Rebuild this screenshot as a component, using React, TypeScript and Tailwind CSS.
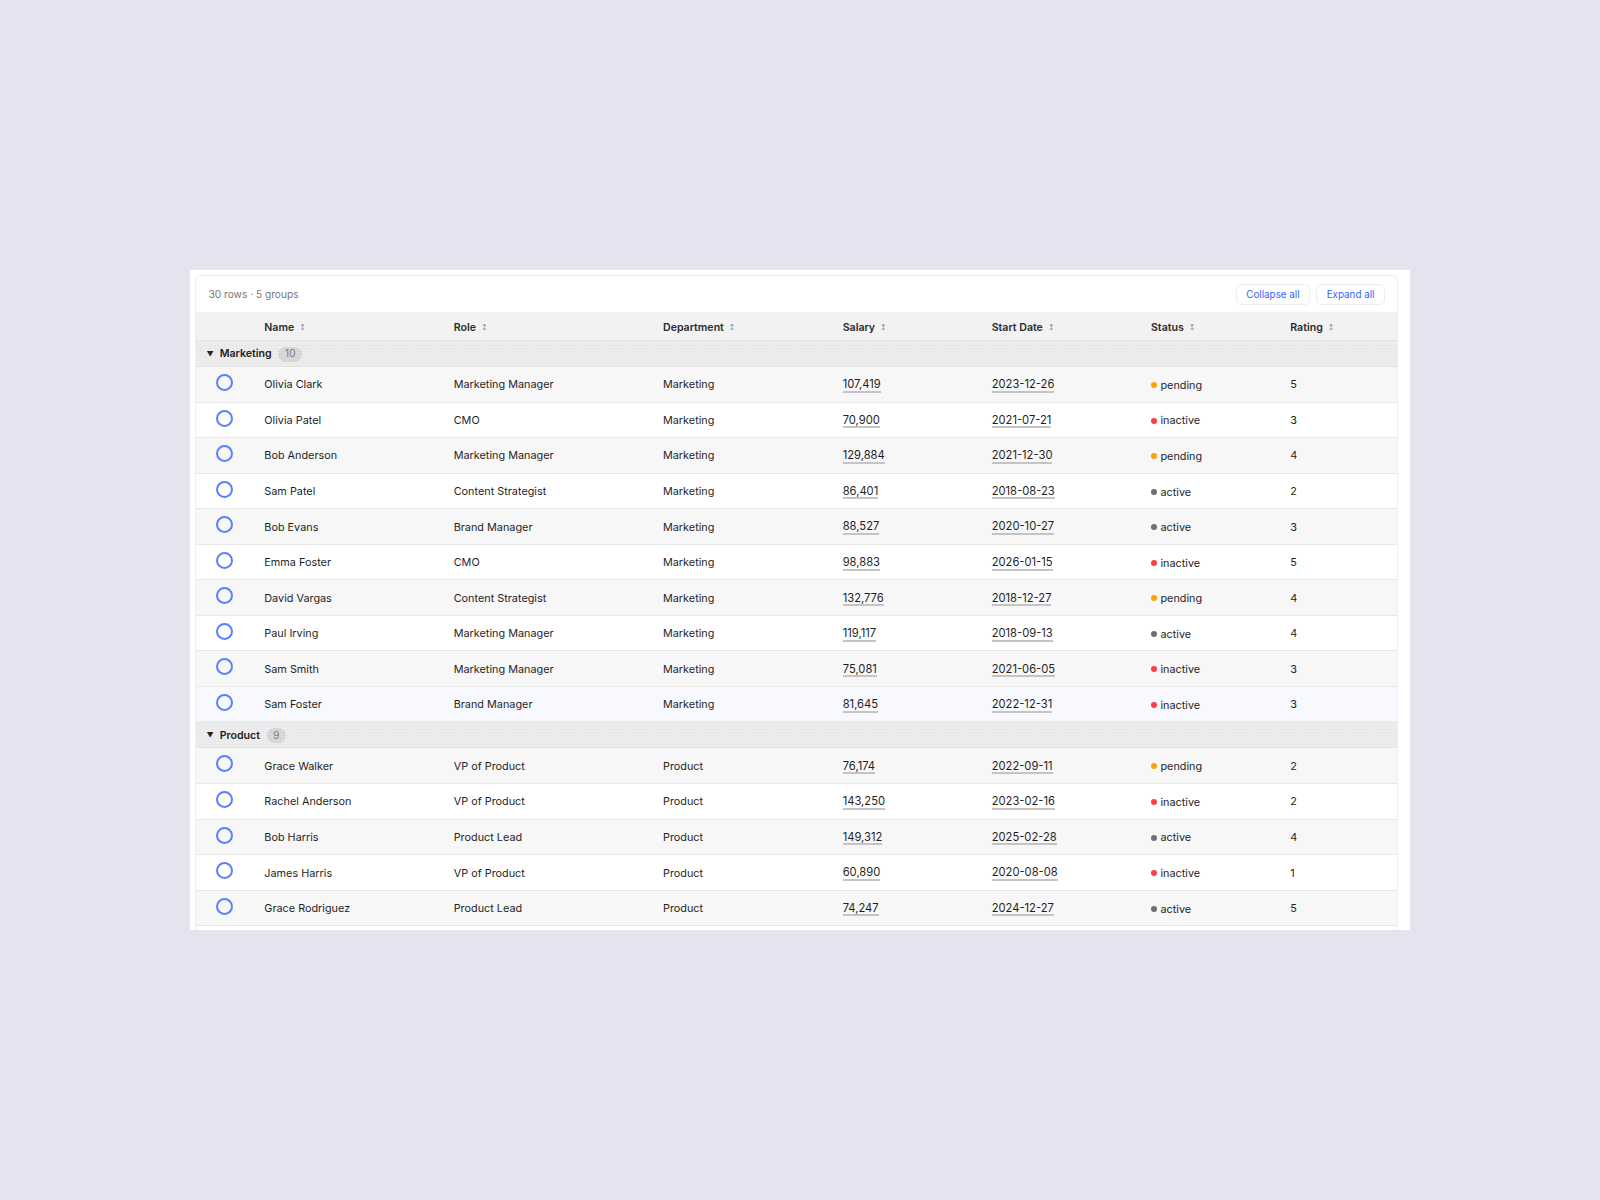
const FONT = "font-['Inter',sans-serif]";

type Row = { name: string; role: string; dept: string; salary: string; start: string; status: "pending" | "inactive" | "active"; rating: number };

const marketing: Row[] = [
  { name: "Olivia Clark", role: "Marketing Manager", dept: "Marketing", salary: "107,419", start: "2023-12-26", status: "pending", rating: 5 },
  { name: "Olivia Patel", role: "CMO", dept: "Marketing", salary: "70,900", start: "2021-07-21", status: "inactive", rating: 3 },
  { name: "Bob Anderson", role: "Marketing Manager", dept: "Marketing", salary: "129,884", start: "2021-12-30", status: "pending", rating: 4 },
  { name: "Sam Patel", role: "Content Strategist", dept: "Marketing", salary: "86,401", start: "2018-08-23", status: "active", rating: 2 },
  { name: "Bob Evans", role: "Brand Manager", dept: "Marketing", salary: "88,527", start: "2020-10-27", status: "active", rating: 3 },
  { name: "Emma Foster", role: "CMO", dept: "Marketing", salary: "98,883", start: "2026-01-15", status: "inactive", rating: 5 },
  { name: "David Vargas", role: "Content Strategist", dept: "Marketing", salary: "132,776", start: "2018-12-27", status: "pending", rating: 4 },
  { name: "Paul Irving", role: "Marketing Manager", dept: "Marketing", salary: "119,117", start: "2018-09-13", status: "active", rating: 4 },
  { name: "Sam Smith", role: "Marketing Manager", dept: "Marketing", salary: "75,081", start: "2021-06-05", status: "inactive", rating: 3 },
  { name: "Sam Foster", role: "Brand Manager", dept: "Marketing", salary: "81,645", start: "2022-12-31", status: "inactive", rating: 3 },
];

const product: Row[] = [
  { name: "Grace Walker", role: "VP of Product", dept: "Product", salary: "76,174", start: "2022-09-11", status: "pending", rating: 2 },
  { name: "Rachel Anderson", role: "VP of Product", dept: "Product", salary: "143,250", start: "2023-02-16", status: "inactive", rating: 2 },
  { name: "Bob Harris", role: "Product Lead", dept: "Product", salary: "149,312", start: "2025-02-28", status: "active", rating: 4 },
  { name: "James Harris", role: "VP of Product", dept: "Product", salary: "60,890", start: "2020-08-08", status: "inactive", rating: 1 },
  { name: "Grace Rodriguez", role: "Product Lead", dept: "Product", salary: "74,247", start: "2024-12-27", status: "active", rating: 5 },
];

const GRID = "grid grid-cols-[68.8px_189.4px_209.3px_179.7px_149px_159.3px_139.3px_1fr] items-center";

const dotColor = { pending: "bg-[#ff9f0a]", inactive: "bg-[#ff3b47]", active: "bg-[#6e6e73]" };

function Header() {
  const cols = ["Name", "Role", "Department", "Salary", "Start Date", "Status", "Rating"];
  return (
    <div className={`${GRID} h-[29px] bg-[#f2f2f2] border-b border-dotted border-[#d0d0d0] text-[10.6px] font-semibold text-[#2b2b2b]`}>
      <div />
      {cols.map((c) => (
        <div key={c} className="flex items-center pt-[3px]">
          {c}
          <span className="ml-[6px] text-[5.5px] font-normal leading-none text-[#666]">↕</span>
        </div>
      ))}
    </div>
  );
}

function GroupRow({ label, count }: { label: string; count: number }) {
  return (
    <div className="flex h-[26px] items-center bg-[#ececec] bg-[radial-gradient(#e2e2e2_0.7px,transparent_0.8px)] bg-[length:3px_3px] border-b border-[#e2e2e2] pl-[11px] pt-[1px] text-[10.6px] font-semibold text-[#222]">
      <span className="mr-[6px] text-[7px] leading-none">▼</span>
      {label}
      <span className="ml-[6.5px] flex h-[15px] items-center rounded-full bg-[#d8d8d8] bg-[radial-gradient(#cccccc_0.7px,transparent_0.8px)] bg-[length:3px_3px] px-[6.5px] text-[10.5px] font-normal text-[#808080]">{count}</span>
    </div>
  );
}

function DataRow({ row, striped, hovered }: { row: Row; striped: boolean; hovered?: boolean }) {
  const bg = hovered ? "bg-[#f7f9ff]" : striped ? "bg-[#f7f7f7]" : "bg-white";
  return (
    <div className={`${GRID} h-[35.55px] ${bg} border-b border-[#e8e8e8] pt-[0.5px] text-[10.85px] text-[#1f1f1f]`}>
      <div className="flex pl-[20px] -mt-[4px]">
        <span className="block h-[17px] w-[17px] rounded-full border-2 border-[#5b7fff]" />
      </div>
      <div>{row.name}</div>
      <div>{row.role}</div>
      <div>{row.dept}</div>
      <div>
        <span className="inline-block border-b-2 border-[#c4c4c4] text-[11.2px] leading-[11.5px]">{row.salary}</span>
      </div>
      <div>
        <span className="inline-block border-b-2 border-[#c4c4c4] text-[11.2px] leading-[11.5px]">{row.start}</span>
      </div>
      <div className="flex items-center pt-[1px]">
        <span className={`mr-[3.5px] h-[6px] w-[6px] rounded-full ${dotColor[row.status]}`} />
        {row.status}
      </div>
      <div>{row.rating}</div>
    </div>
  );
}

export default function App() {
  return (
    <div className={`flex min-h-[1200px] items-center justify-center bg-[#e5e3f0] ${FONT}`}>
      <div className="h-[660px] w-[1220px] overflow-hidden bg-white pl-[5.5px] pr-[13px] pt-[5px]">
        <div className="h-full rounded-t-[6px] border border-b-0 border-[#eeeeee] -mx-px">
          <div className="flex h-[36px] items-center justify-between pl-[13px] pr-[12px]">
            <span className="pt-[2px] text-[10.16px] text-[#777]">30 rows · 5 groups</span>
            <div className="flex gap-[6px] text-[9.85px]">
              <button className="h-[21px] rounded-[5px] border border-[#eeeeee] bg-white px-[9.5px] text-[#3366ff]">Collapse all</button>
              <button className="h-[21px] rounded-[5px] border border-[#eeeeee] bg-white px-[9.5px] text-[#3366ff]">Expand all</button>
            </div>
          </div>
          <Header />
          <GroupRow label="Marketing" count={10} />
          {marketing.map((r, i) => (
            <DataRow key={r.name} row={r} striped={i % 2 === 0} hovered={i === 9} />
          ))}
          <GroupRow label="Product" count={9} />
          {product.map((r, i) => (
            <DataRow key={r.name} row={r} striped={i % 2 === 0} />
          ))}
        </div>
      </div>
    </div>
  );
}
